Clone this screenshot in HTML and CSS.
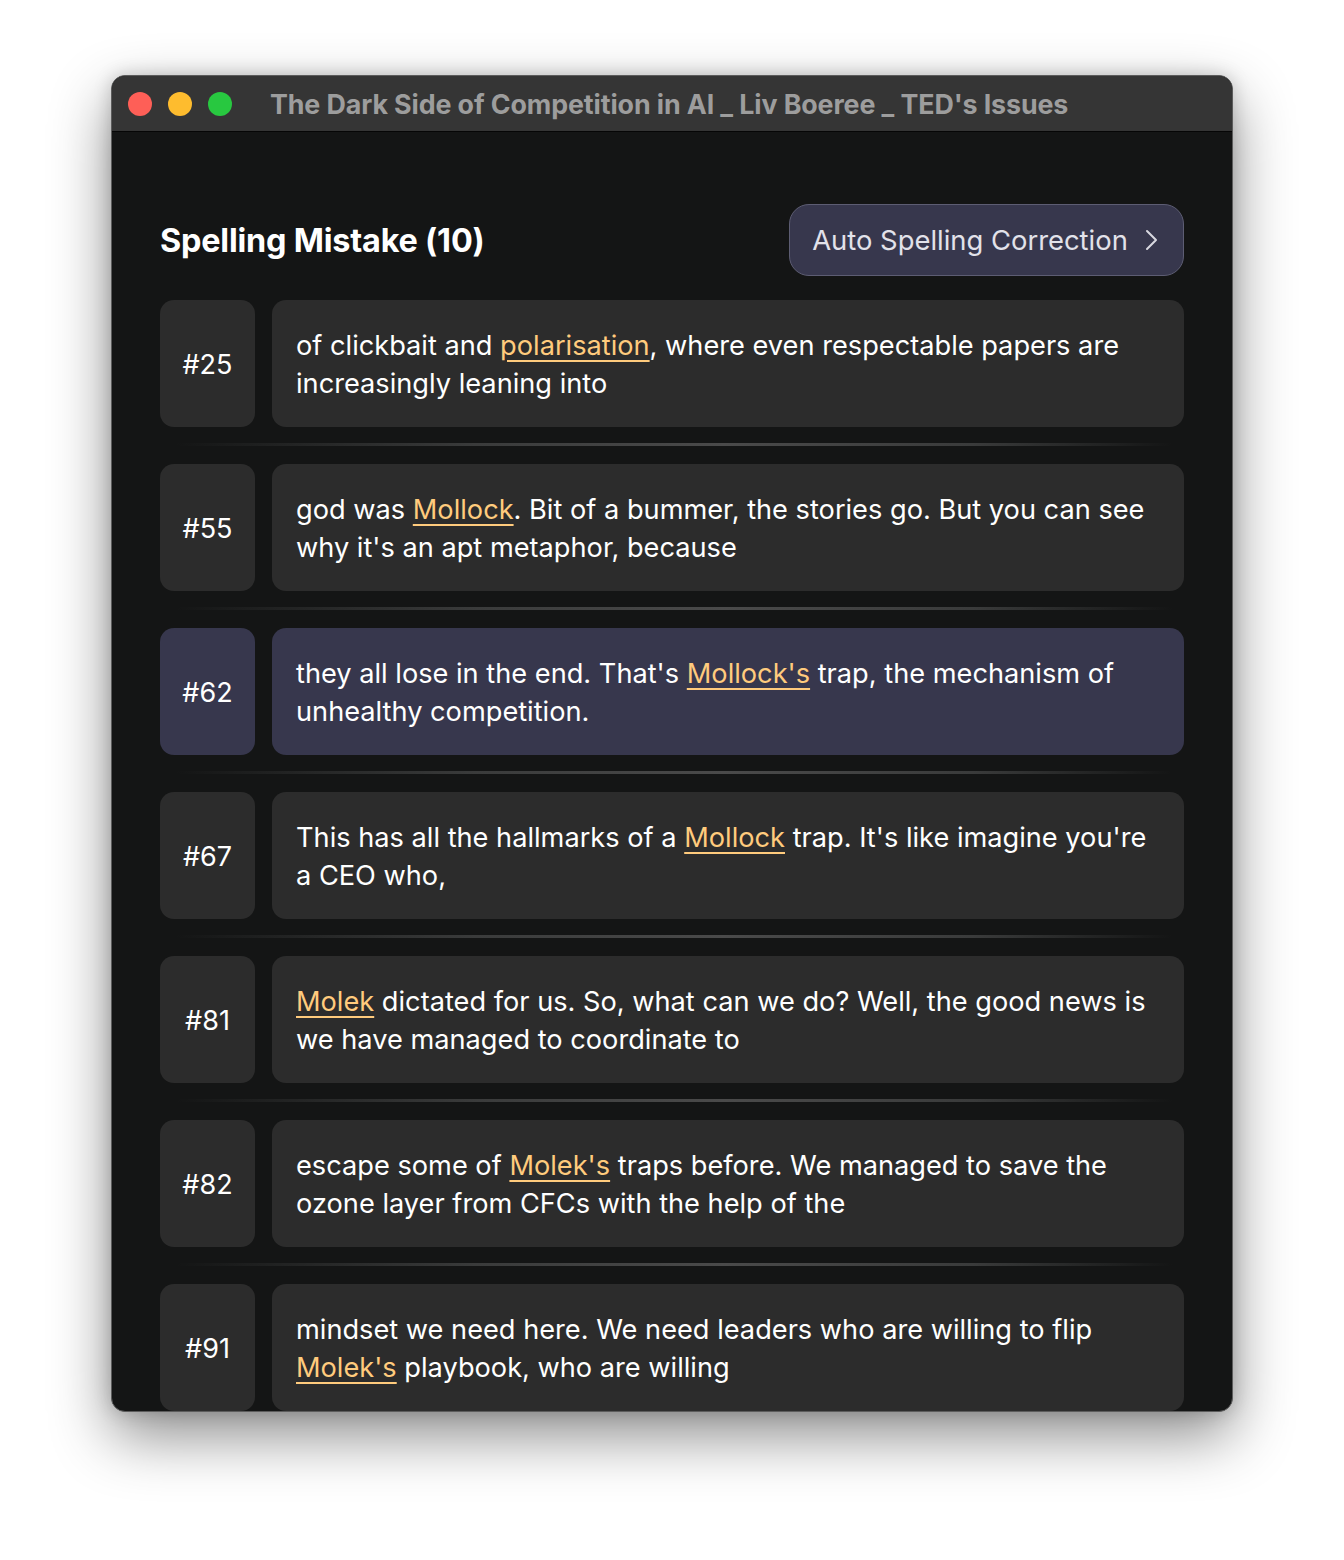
FILE: index.html
```html
<!DOCTYPE html>
<html>
<head>
<meta charset="utf-8">
<title>Spelling Mistake</title>
<link rel="stylesheet" href="styles.css">
</head>
<body>
<div class="window">
  <div class="titlebar">
    <div class="lights">
      <span class="light red"></span>
      <span class="light yellow"></span>
      <span class="light green"></span>
    </div>
    <div class="title">The Dark Side of Competition in AI _ Liv Boeree _ TED's Issues</div>
  </div>
  <div class="content">
    <div class="header">
      <h1 class="heading">Spelling Mistake (10)</h1>
      <button class="auto-btn">Auto Spelling Correction
        <svg class="chev" width="14" height="22" viewBox="0 0 14 22"><path d="M2 2 L11 11 L2 20" fill="none" stroke="#d8d8e0" stroke-width="2" stroke-linecap="round" stroke-linejoin="round"/></svg>
      </button>
    </div>
    <div class="list">
      <div class="row">
        <div class="num">#25</div>
        <div class="text">of clickbait and <span class="err">polarisation</span>, where even respectable papers are increasingly leaning into</div>
      </div>
      <div class="sep"></div>
      <div class="row">
        <div class="num">#55</div>
        <div class="text">god was <span class="err">Mollock</span>. Bit of a bummer, the stories go. But you can see why it's an apt metaphor, because</div>
      </div>
      <div class="sep"></div>
      <div class="row active">
        <div class="num">#62</div>
        <div class="text">they all lose in the end. That's <span class="err">Mollock's</span> trap, the mechanism of unhealthy competition.</div>
      </div>
      <div class="sep"></div>
      <div class="row">
        <div class="num">#67</div>
        <div class="text">This has all the hallmarks of a <span class="err">Mollock</span> trap. It's like imagine you're a CEO who,</div>
      </div>
      <div class="sep"></div>
      <div class="row">
        <div class="num">#81</div>
        <div class="text"><span class="err">Molek</span> dictated for us. So, what can we do? Well, the good news is we have managed to coordinate to</div>
      </div>
      <div class="sep"></div>
      <div class="row">
        <div class="num">#82</div>
        <div class="text">escape some of <span class="err">Molek's</span> traps before. We managed to save the ozone layer from CFCs with the help of the</div>
      </div>
      <div class="sep"></div>
      <div class="row">
        <div class="num">#91</div>
        <div class="text">mindset we need here. We need leaders who are willing to flip <span class="err">Molek's</span> playbook, who are willing</div>
      </div>
    </div>
  </div>
</div>
</body>
</html>
```
FILE: styles.css
```css
html, body {
  margin: 0;
  padding: 0;
  background: #ffffff;
}
body {
  padding: 75px 0 0 111px;
  height: 1560px;
  box-sizing: border-box;
  font-family: Inter, "Noto Sans", sans-serif;
}
.window {
  width: 1122px;
  height: 1337px;
  box-sizing: border-box;
  border: 1px solid #5c5c5c;
  border-radius: 14px;
  background: #141515;
  overflow: hidden;
  display: flex;
  flex-direction: column;
  box-shadow: 0 24px 60px rgba(0,0,0,0.45), 0 0 18px rgba(0,0,0,0.18);
}
.titlebar {
  height: 56px;
  flex: none;
  background: #353535;
  border-bottom: 1px solid #060606;
  display: flex;
  align-items: center;
  padding-left: 16px;
  box-sizing: border-box;
}
.lights {
  display: flex;
  gap: 16px;
}
.light {
  width: 24px;
  height: 24px;
  border-radius: 50%;
  display: block;
}
.red { background: #fe5f57; }
.yellow { background: #febc2e; }
.green { background: #28c840; }
.title {
  margin-left: 38px;
  color: #9d9d9d;
  font-weight: 700;
  font-size: 26.8px;
  letter-spacing: -0.1px;
  white-space: nowrap;
}
.content {
  padding: 72px 48px 0 48px;
  flex: 1;
  overflow: hidden;
}
.header {
  display: flex;
  align-items: center;
  justify-content: space-between;
  margin-bottom: 24px;
}
.heading {
  margin: 0;
  color: #ffffff;
  font-size: 32.4px;
  font-weight: 700;
  letter-spacing: -0.2px;
}
.auto-btn {
  height: 72px;
  width: 395px;
  box-sizing: border-box;
  border: 1.5px solid #5d5d73;
  border-radius: 20px;
  background: #37374d;
  color: #e2e2ea;
  font-family: Inter, "Noto Sans", sans-serif;
  font-size: 27.4px;
  display: flex;
  align-items: center;
  justify-content: center;
  gap: 17px;
  padding: 0 2px 0 0;
}
.chev { display: block; }
.list {
  display: flex;
  flex-direction: column;
}
.row {
  display: flex;
  gap: 17px;
  height: 127px;
  flex: none;
}
.num {
  width: 95px;
  flex: none;
  background: #2c2c2c;
  border-radius: 14px;
  color: #ffffff;
  font-size: 27px;
  display: flex;
  align-items: center;
  justify-content: center;
  padding-top: 2px;
  box-sizing: border-box;
}
.text {
  flex: 1;
  background: #2c2c2c;
  border-radius: 14px;
  color: #ffffff;
  font-size: 27.2px;
  line-height: 38px;
  padding: 27px 24px 0 24px;
  box-sizing: border-box;
}
.row.active .num,
.row.active .text {
  background: #37374d;
}
.err {
  color: #ffcb7d;
  text-decoration: underline;
  text-decoration-thickness: 2px;
  text-underline-offset: 5px;
}
.sep {
  height: 3px;
  margin: 16px 12px 18px 16px;
  background: linear-gradient(90deg, rgba(70,70,70,0) 0%, #3a3b3b 30%, #4a4a4a 55%, #3a3b3b 80%, rgba(70,70,70,0) 100%);
  flex: none;
}
```
